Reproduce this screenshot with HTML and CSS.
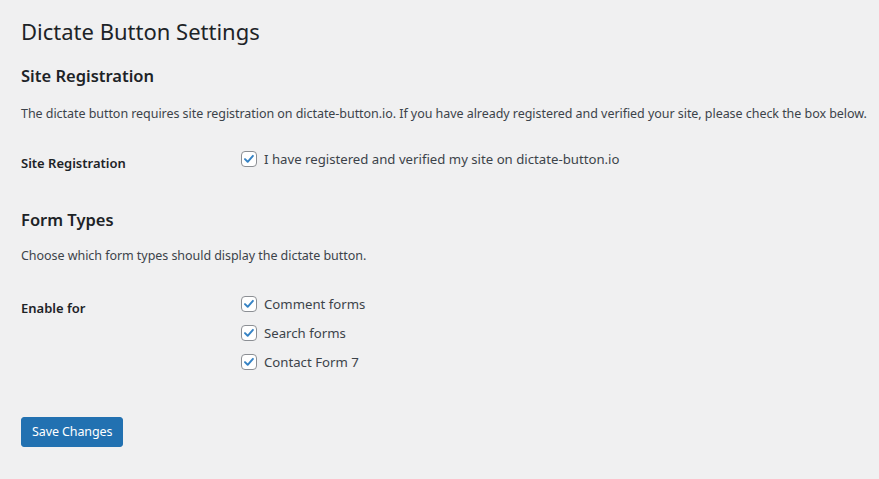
FILE: index.html
```html
<!DOCTYPE html>
<html lang="en">
<head>
<meta charset="utf-8">
<title>Dictate Button Settings</title>
<link rel="stylesheet" href="styles.css">
</head>
<body>
<div class="wrap">
  <h1 class="page-title">Dictate Button Settings</h1>
  <form class="settings">
    <h2 class="section-title">Site Registration</h2>
    <p class="section-desc">The dictate button requires site registration on dictate-button.io. If you have already registered and verified your site, please check the box below.</p>
    <div class="row row-single">
      <div class="row-label">Site Registration</div>
      <div class="row-field">
        <label class="check"><span class="box"><svg viewBox="0 0 16 16" width="16" height="16"><path d="M3.4 8.1l3.1 3.1 6-6.8" fill="none" stroke="#3582c4" stroke-width="2.2" stroke-linecap="round" stroke-linejoin="round"/></svg></span>I have registered and verified my site on dictate-button.io</label>
      </div>
    </div>
    <h2 class="section-title section-second">Form Types</h2>
    <p class="section-desc">Choose which form types should display the dictate button.</p>
    <div class="row row-multi">
      <div class="row-label">Enable for</div>
      <div class="row-field list">
        <label class="check"><span class="box"><svg viewBox="0 0 16 16" width="16" height="16"><path d="M3.4 8.1l3.1 3.1 6-6.8" fill="none" stroke="#3582c4" stroke-width="2.2" stroke-linecap="round" stroke-linejoin="round"/></svg></span>Comment forms</label>
        <label class="check"><span class="box"><svg viewBox="0 0 16 16" width="16" height="16"><path d="M3.4 8.1l3.1 3.1 6-6.8" fill="none" stroke="#3582c4" stroke-width="2.2" stroke-linecap="round" stroke-linejoin="round"/></svg></span>Search forms</label>
        <label class="check"><span class="box"><svg viewBox="0 0 16 16" width="16" height="16"><path d="M3.4 8.1l3.1 3.1 6-6.8" fill="none" stroke="#3582c4" stroke-width="2.2" stroke-linecap="round" stroke-linejoin="round"/></svg></span>Contact Form 7</label>
      </div>
    </div>
    <div class="submit">
      <button type="button" class="button-primary">Save Changes</button>
    </div>
  </form>
</div>
</body>
</html>
```
FILE: styles.css
```css
html, body {
  margin: 0;
  padding: 0;
  background: #f0f0f1;
}
body {
  font-family: "Noto Sans", "Open Sans", sans-serif;
  font-size: 13px;
  color: #3c434a;
  line-height: 1.4;
}
.wrap {
  padding: 0 0 0 21px;
}
.page-title {
  margin: 0;
  padding: 17px 0 0;
  font-size: 22px;
  font-weight: 400;
  line-height: 29px;
  color: #1d2327;
}
.section-title {
  margin: 19px 0 0;
  font-size: 16.5px;
  font-weight: 600;
  line-height: 22px;
  color: #1d2327;
}
.section-desc {
  margin: 17px 0 0;
  font-size: 12.5px;
  letter-spacing: -0.05px;
  line-height: 20px;
  white-space: nowrap;
}
.row {
  display: flex;
}
.row-single {
  margin-top: 26px;
}
.row-multi {
  margin-top: 29px;
}
.row-label {
  width: 220px;
  flex: none;
  font-weight: 600;
  color: #1d2327;
  line-height: 17px;
  padding-top: 5px;
}
.row-field {
  display: flex;
  flex-direction: column;
  gap: 11px;
}
.check {
  display: flex;
  align-items: center;
  gap: 7px;
  line-height: 18px;
  font-size: 13.2px;
}
.box {
  width: 16px;
  height: 16px;
  box-sizing: border-box;
  border: 1px solid #8c8f94;
  border-radius: 4px;
  background: #fff;
  display: flex;
  align-items: center;
  justify-content: center;
  flex: none;
}
.box svg {
  display: block;
  width: 14px;
  height: 14px;
}
.section-title.section-second {
  margin-top: 37px;
}
.section-second + .section-desc {
  margin-top: 15px;
}
.submit {
  margin-top: 46px;
}
.button-primary {
  font-family: inherit;
  font-size: 12.5px;
  letter-spacing: -0.1px;
  background: #2271b1;
  border: 1px solid #2271b1;
  color: #fff;
  border-radius: 3px;
  height: 30px;
  padding: 0 10px;
  line-height: 28px;
}
```
